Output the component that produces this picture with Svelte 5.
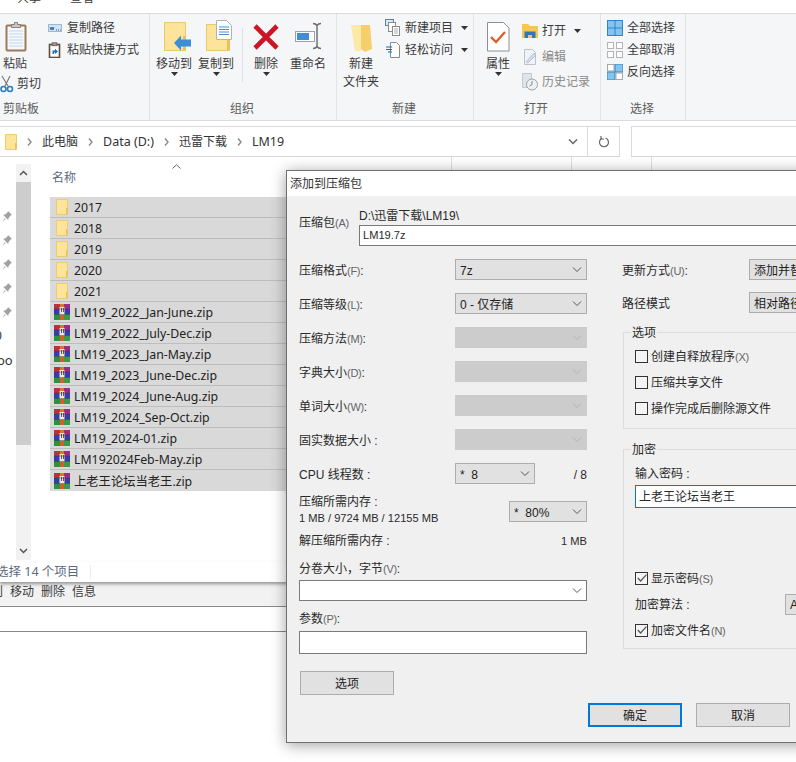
<script>
	const FILES = [
		{ name: '2017', dir: true },
		{ name: '2018', dir: true },
		{ name: '2019', dir: true },
		{ name: '2020', dir: true },
		{ name: '2021', dir: true },
		{ name: 'LM19_2022_Jan-June.zip' },
		{ name: 'LM19_2022_July-Dec.zip' },
		{ name: 'LM19_2023_Jan-May.zip' },
		{ name: 'LM19_2023_June-Dec.zip' },
		{ name: 'LM19_2024_June-Aug.zip' },
		{ name: 'LM19_2024_Sep-Oct.zip' },
		{ name: 'LM19_2024-01.zip' },
		{ name: 'LM192024Feb-May.zip' },
		{ name: '上老王论坛当老王.zip' }
	];

	const DISABLED_ROWS = [
		{ label: '压缩方法', key: '(M)' },
		{ label: '字典大小', key: '(D)' },
		{ label: '单词大小', key: '(W)' },
		{ label: '固实数据大小', key: '' }
	];

	const OPTIONS = [
		{ label: '创建自释放程序', key: '(X)' },
		{ label: '压缩共享文件', key: '' },
		{ label: '操作完成后删除源文件', key: '' }
	];

	const CRUMBS = [
		{ name: '此电脑' },
		{ name: 'Data (D:)', latin: true },
		{ name: '迅雷下载' },
		{ name: 'LM19', latin: true }
	];
</script>

{#snippet chevron()}
	<svg class="chev" width="10" height="6" viewBox="0 0 10 6" fill="none" stroke="currentColor" stroke-width="1"><path d="M1 .5 5 4.5 9 .5" /></svg>
{/snippet}

{#snippet drop()}
	<svg class="drop" width="7" height="4" viewBox="0 0 7 4"><path d="M0 0h7L3.5 4z" fill="#333" /></svg>
{/snippet}

{#snippet crumbArrow()}
	<svg class="crumb-arrow" width="5" height="8" viewBox="0 0 5 8" fill="none" stroke="#8a8a8a" stroke-width="1.4"><path d="M1 .5 4 4 1 7.5" /></svg>
{/snippet}

{#snippet pin()}
	<svg class="pin" width="10" height="11" viewBox="0 0 10 11"><path d="M6 0 10 4 8.6 4.6 6.6 7 6.2 9 1 3.8 3 3.4 5.4 1.4zM3 7 0 10.5 3.6 8z" fill="#a2a2a2" /></svg>
{/snippet}

{#snippet folderSmall()}
	<svg width="12" height="16" viewBox="0 0 12 16" class="file-icon-dir"><path d="M.5.5h11v15H.5z" fill="#fde49a" stroke="#eccb72" /><path d="M10 9v6.500h1.500V9z" fill="#e9c25c" /></svg>
{/snippet}

{#snippet rar()}
	<svg width="16" height="16" viewBox="0 0 16 16" class="file-icon">
		<rect x="0" y="0" width="6" height="5" fill="#b8323c" />
		<rect x="6" y="0" width="4" height="5" fill="#d8782c" />
		<rect x="10" y="0" width="6" height="5" fill="#9c2c80" />
		<rect x="0" y="5" width="16" height="5" fill="#3a3ab0" />
		<rect x="0" y="10" width="6" height="6" fill="#2f8f3c" />
		<rect x="6" y="10" width="4" height="6" fill="#c8642c" />
		<rect x="10" y="10" width="6" height="6" fill="#3a9a48" />
		<path d="M5.500 3v8h5V3" fill="#efe9d4" />
		<rect x="7" y="4" width="1" height="4" fill="#5a5a5a" />
		<rect x="9" y="4" width="1" height="4" fill="#5a5a5a" />
		<rect x="0" y="4.500" width="16" height="1" fill="#5a2a4a" opacity=".5" />
		<rect x="0" y="10" width="16" height="1" fill="#1e3a3a" opacity=".5" />
	</svg>
{/snippet}

{#snippet check(on)}
	<span class="check">
		{#if on}
			<svg width="10" height="10" viewBox="0 0 10 10" fill="none" stroke="#555" stroke-width="1.2"><path d="M.8 5 3.6 8 9.4 1.6" /></svg>
		{/if}
	</span>
{/snippet}

{#snippet select(text, extra = '')}
	<div class="select {extra}">
		<span class="select-text">{text}</span>
		{@render chevron()}
	</div>
{/snippet}

<div class="screen">
	<div class="tabs">
		<span class="tab-a">共享</span>
		<span class="tab-b">查看</span>
	</div>

	<div class="ribbon">
		<!-- clipboard -->
		<section class="group g1">
			<div class="tools">
				<div class="paste-col">
					<div class="tool tool-paste">
						<svg width="30" height="38" viewBox="0 0 30 38">
							<rect x="6.500" y="9.500" width="19" height="25" rx="1" fill="#f4f8fc" stroke="#9b7a58" stroke-width="2" />
							<path d="M9 15h14M9 18h14M9 21h14M9 24h14M9 27h14M9 30h14" stroke="#c4d6ea" />
							<path d="M11.500 11.500v-3h3v-2h3v2h3v3z" fill="#c9c9c9" stroke="#77675a" stroke-width=".8" />
						</svg>
						<span>粘贴</span>
					</div>
					<div class="cut">
						<svg width="14" height="18" viewBox="0 0 14 18" fill="none">
							<path d="M10 1 5 11M2 1l6 10" stroke="#7c7c7c" stroke-width="1.2" />
							<circle cx="3.500" cy="14" r="2.500" stroke="#2a7fc4" stroke-width="1.6" />
							<circle cx="10" cy="14" r="2.500" stroke="#2a7fc4" stroke-width="1.6" />
						</svg>
						<span>剪切</span>
					</div>
				</div>
				<div class="small-col col-clip">
					<div class="small">
						<svg width="16" height="16" viewBox="0 0 16 16"><rect x="1.500" y="4.500" width="13" height="7" fill="#cfe4f6" stroke="#9db9d2" /><path d="M3 7l1 3 1-3 1 3 1-3" fill="none" stroke="#36618c" stroke-width=".9" /><path d="M9 10h1M11 10h1M13 10h.8" stroke="#36618c" /></svg>
						<span>复制路径</span>
					</div>
					<div class="small">
						<svg width="16" height="16" viewBox="0 0 16 16"><rect x="2.500" y="2.500" width="10" height="13" fill="#fff" stroke="#5f4c3c" stroke-width="1.6" /><rect x="5" y="0.800" width="5" height="3" fill="#999" stroke="#5f4c3c" stroke-width=".7" /><path d="M5.500 12V8.500H8V6.800l3 2.600L8 12v-1.600H7V12z" fill="#1e6fb8" /></svg>
						<span>粘贴快捷方式</span>
					</div>
				</div>
			</div>
			<div class="group-label label-clip">剪贴板</div>
		</section>

		<!-- organize -->
		<section class="group g2">
			<div class="tools org">
				<div class="tool">
					<svg width="36" height="38" viewBox="0 0 36 38">
						<rect x="8.500" y="6.500" width="21" height="28" fill="#fde49a" stroke="#e9c86e" />
						<rect x="27" y="20" width="3" height="14" fill="#e9c25c" />
						<path d="M18 27 25 19.500v4h10v7H25v4z" fill="#3a8fd8" />
					</svg>
					<span>移动到</span>
					{@render drop()}
				</div>
				<div class="tool">
					<svg width="36" height="38" viewBox="0 0 36 38">
						<rect x="8.500" y="8.500" width="23" height="26" fill="#fde49a" stroke="#e9c86e" />
						<rect x="29" y="20" width="3" height="14" fill="#e9c25c" />
						<path d="M18.500 4.500h10l5 5v14h-15z" fill="#fff" stroke="#aab4c0" />
						<path d="M21 11h10M21 13.500h10M21 16h10M21 18.500h10" stroke="#4c8fd0" />
					</svg>
					<span>复制到</span>
					{@render drop()}
				</div>
				<div class="ribbon-sep"></div>
				<div class="tool">
					<svg width="36" height="38" viewBox="0 0 36 38">
						<path d="M7 10 29 32M29 10 7 32" stroke="#cc1422" stroke-width="4.600" />
					</svg>
					<span>删除</span>
					{@render drop()}
				</div>
				<div class="tool">
					<svg width="36" height="38" viewBox="0 0 36 38" fill="none">
						<rect x="5.500" y="15.500" width="19" height="10" stroke="#9aa3ac" fill="#fff" />
						<rect x="7" y="17" width="12" height="7" fill="#3f8fd6" />
						<path d="M23 7.500c2 0 3 .5 4 2 1-1.500 2-2 4-2M23 32.500c2 0 3-.5 4-2 1 1.500 2 2 4 2M27 9v22" stroke="#6a6a6a" stroke-width="1.400" />
					</svg>
					<span>重命名</span>
				</div>
			</div>
			<div class="group-label label-org">组织</div>
		</section>

		<!-- new -->
		<section class="group g3">
			<div class="tools">
				<div class="tool tool-new">
					<svg width="36" height="38" viewBox="0 0 36 38">
						<path d="M8 9h10v26H12z" fill="#fde8a8" />
						<path d="M18 9h9l2 24-7 3-4-3z" fill="#f6cf6a" />
					</svg>
					<span>新建</span>
					<span>文件夹</span>
				</div>
				<div class="small-col col-new">
					<div class="small">
						<svg width="16" height="18" viewBox="0 0 16 18"><rect x="0.500" y="0.500" width="8" height="6" fill="#dbe9f5" stroke="#5f7f9c" /><rect x="3.500" y="3.500" width="7" height="9" fill="#fff" stroke="#8a8a8a" /><rect x="7.500" y="7.500" width="7" height="9" fill="#fff" stroke="#8a8a8a" /><path d="M9 10h4M9 12h4M9 14h4" stroke="#aaa" /></svg>
						<span>新建项目</span>
						{@render drop()}
					</div>
					<div class="small">
						<svg width="16" height="18" viewBox="0 0 16 18" fill="none"><path d="M5.500 1.500h6l3 3v12h-9z" fill="#fff" stroke="#8a8a8a" /><path d="M1 6h6M1 8.500h6M3 11h4" stroke="#1f6ea8" /></svg>
						<span>轻松访问</span>
						{@render drop()}
					</div>
				</div>
			</div>
			<div class="group-label label-new">新建</div>
		</section>

		<!-- open -->
		<section class="group g4">
			<div class="tools">
				<div class="tool">
					<svg width="36" height="38" viewBox="0 0 36 38">
						<path d="M7.500 6.500h16l5.500 5.500v23H7.500z" fill="#fff" stroke="#8f8f8f" />
						<path d="M11 21 16 26 25 16" fill="none" stroke="#dc5f2c" stroke-width="2.400" />
					</svg>
					<span>属性</span>
					{@render drop()}
				</div>
				<div class="open-col">
					<div class="small">
						<svg width="16" height="16" viewBox="0 0 16 16"><path d="M0 1h6l2 2h8v12H0z" fill="#f6c64e" /><path d="M2.500 8.500h11V15h-3.500v-3H6v3H2.500z" fill="#2c79ba" /></svg>
						<span>打开</span>
						{@render drop()}
					</div>
					<div class="small muted">
						<svg width="16" height="18" viewBox="0 0 16 18"><path d="M2.500 1.500h8l3 3v12h-11z" fill="#f0f3f6" stroke="#b9c3cc" /><path d="M4 14 12 5l2 2-8 8z" fill="#cfdbe6" stroke="#a9b8c6" stroke-width=".7" /></svg>
						<span>编辑</span>
					</div>
					<div class="small muted">
						<svg width="16" height="18" viewBox="0 0 16 18"><path d="M.500.500h9v14h-9z" fill="#dfe4e9" stroke="#c4c9ce" /><circle cx="10" cy="11.500" r="5.500" fill="#eef1f3" stroke="#9aa1a8" /><path d="M10 8v3.500l-2.500 1.500" fill="none" stroke="#7f868c" /></svg>
						<span>历史记录</span>
					</div>
				</div>
			</div>
			<div class="group-label label-open">打开</div>
		</section>

		<!-- select -->
		<section class="group g5">
			<div class="small-col col-select">
				<div class="small">
					<svg width="16" height="16" viewBox="0 0 16 16"><rect x="0" y="0" width="16" height="16" fill="#2e86c9" /><rect x="1" y="1" width="6.500" height="6.500" fill="#84c4ee" /><rect x="8.500" y="1" width="6.500" height="6.500" fill="#84c4ee" /><rect x="1" y="8.500" width="6.500" height="6.500" fill="#84c4ee" /><rect x="8.500" y="8.500" width="6.500" height="6.500" fill="#84c4ee" /></svg>
					<span>全部选择</span>
				</div>
				<div class="small">
					<svg width="16" height="16" viewBox="0 0 16 16" fill="#fff" stroke="#b4b4b4"><rect x=".5" y=".5" width="6" height="6" /><rect x="9.500" y=".5" width="6" height="6" /><rect x=".5" y="9.500" width="6" height="6" /><rect x="9.500" y="9.500" width="6" height="6" /></svg>
					<span>全部取消</span>
				</div>
				<div class="small">
					<svg width="16" height="16" viewBox="0 0 16 16"><rect x=".5" y=".5" width="6.500" height="6.500" fill="#fff" stroke="#a8a8a8" /><rect x="8" y="0" width="8" height="8" fill="#84c4ee" stroke="#2e86c9" /><rect x="0" y="8" width="8" height="8" fill="#84c4ee" stroke="#2e86c9" /><rect x="9" y="9" width="6.500" height="6.500" fill="#fff" stroke="#a8a8a8" /></svg>
					<span>反向选择</span>
				</div>
			</div>
			<div class="group-label label-select">选择</div>
		</section>
	</div>

	<div class="addr-row">
		<div class="addr">
			<svg class="addr-folder" width="12" height="16" viewBox="0 0 12 16"><path d="M.5.500h11v15H.5z" fill="#fde49a" stroke="#eccb72" /><path d="M10 9v6.500h1.500V9z" fill="#e9c25c" /></svg>
			{#each CRUMBS as c (c.name)}
				{@render crumbArrow()}
				<span class="crumb" class:crumb-latin={c.latin}>{c.name}</span>
			{/each}
			<span class="addr-space"></span>
			<svg class="addr-chev" width="10" height="6" viewBox="0 0 10 6" fill="none" stroke="#666" stroke-width="1.500"><path d="M1 .5 5 4.500 9 .5" /></svg>
			<div class="refresh">
				<svg width="12" height="12" viewBox="0 0 12 12" fill="none" stroke="#666" stroke-width="1.200"><path d="M7.500 2a4.500 4.500 0 1 1-4 .5" /><path d="M3 .5v3h3" transform="translate(0 -.5)" /></svg>
			</div>
		</div>
		<div class="search"></div>
	</div>

	<div class="content">
		<div class="nav">
			<div class="pins">
				{#each [0, 1, 2, 3, 4] as i (i)}
					{@render pin()}
				{/each}
			</div>
			<span class="nav-a">0</span>
			<span class="nav-b">oo</span>
		</div>
		<div class="scrollbar">
			<svg class="sb-up" width="9" height="6" viewBox="0 0 9 6" fill="none" stroke="#555" stroke-width="1.500"><path d="M1 5 4.500 1.500 8 5" /></svg>
			<div class="thumb"></div>
			<svg class="sb-down" width="9" height="6" viewBox="0 0 9 6" fill="none" stroke="#555" stroke-width="1.500"><path d="M1 1 4.500 4.500 8 1" /></svg>
		</div>
		<div class="list">
			<div class="list-head">
				<svg class="sort" width="9" height="5" viewBox="0 0 9 5" fill="none" stroke="#666"><path d="M.5 4.500 4.500.8 8.500 4.500" /></svg>
				<div class="head-cell cell-name"><span>名称</span></div>
				<div class="head-cell cell-b"></div>
				<div class="head-cell cell-c"></div>
			</div>
			{#each FILES as f (f.name)}
				<div class="file">
					<span class="file-slot">
						{#if f.dir}
							{@render folderSmall()}
						{:else}
							{@render rar()}
						{/if}
					</span>
					<span class="file-name">{f.name}</span>
				</div>
			{/each}
		</div>
	</div>

	<div class="status"><span class="status-text">选择 14 个项目</span><span class="status-sep"></span></div>

	<div class="below">
		<span class="below-clip"><span>到</span></span>
		<span>移动</span>
		<span>删除</span>
		<span>信息</span>
	</div>
	<div class="below-field"></div>

	<!-- 7-Zip dialog over the explorer window -->
	<div class="dialog">
		<div class="title">添加到压缩包</div>
		<div class="dialog-body">
			<div class="archive">
				<div class="archive-label">压缩包<i>(A)</i></div>
				<div class="archive-path">
					<div class="path-text"><span>D:\</span>迅雷下载<span>\LM19\</span></div>
					<div class="input"><span class="lat">LM19.7z</span></div>
				</div>
			</div>

			<div class="columns">
				<div class="left">
					<div class="row"><span class="row-label">压缩格式<i>(F)</i>:</span>{@render select('7z', 'wide')}</div>
					<div class="row"><span class="row-label">压缩等级<i>(L)</i>:</span>{@render select('0 - 仅存储', 'wide')}</div>
					{#each DISABLED_ROWS as r (r.label)}
						<div class="row"><span class="row-label">{r.label}<i>{r.key}</i>{r.key ? ':' : ' :'}</span>{@render select('', 'wide off')}</div>
					{/each}
					<div class="row row-cpu">
						<span class="row-label">CPU 线程数 :</span>
						{@render select('*  8', 'short')}
						<span class="cpu-total">/ 8</span>
					</div>
					<div class="mem">
						<div>
							<div class="line">压缩所需内存 :</div>
							<div class="line"><span class="lat">1 MB / 9724 MB / 12155 MB</span></div>
						</div>
						{@render select('*  80%', 'pct')}
					</div>
					<div class="line line-spread"><span>解压缩所需内存 :</span><span class="lat">1 MB</span></div>
					<div class="line vol-label">分卷大小，字节<i>(V)</i>:</div>
					<div class="combo">{@render chevron()}</div>
					<div class="line param-label">参数<i>(P)</i>:</div>
					<div class="param"></div>
					<div class="btn btn-opts">选项</div>
				</div>

				<div class="right">
					<div class="row"><span class="right-label">更新方式<i>(U)</i>:</span>{@render select('添加并替换文件', 'far')}</div>
					<div class="row row-path"><span class="right-label">路径模式</span>{@render select('相对路径', 'far')}</div>

					<fieldset class="box box-opts">
						<legend>选项</legend>
						{#each OPTIONS as o (o.label)}
							<div class="opt">{@render check(false)}<span>{o.label}<i>{o.key}</i></span></div>
						{/each}
					</fieldset>

					<fieldset class="box box-enc">
						<legend>加密</legend>
						<div class="line">输入密码 :</div>
						<div class="pass">上老王论坛当老王</div>
						<div class="opt opt-show">{@render check(true)}<span>显示密码<i>(S)</i></span></div>
						<div class="algo"><span>加密算法 :</span>{@render select('AES-256', 'far algo-sel')}</div>
						<div class="opt">{@render check(true)}<span>加密文件名<i>(N)</i></span></div>
					</fieldset>
				</div>
			</div>

			<div class="footer">
				<div class="btn btn-ok">确定</div>
				<div class="btn">取消</div>
			</div>
		</div>
	</div>
</div>

<style>
	:global(body) {
		margin: 0;
		background: #fff;
	}

	.screen {
		position: relative;
		width: 796px;
		height: 762px;
		overflow: hidden;
		background: #fff;
		font-family: 'Noto Sans', 'Noto Sans CJK SC', sans-serif;
		font-size: 12px;
		line-height: 16px;
		color: #3a3a3a;
	}

	i {
		font-style: normal;
		color: #666;
		font-size: 11px;
		letter-spacing: -0.3px;
	}

	.lat {
		font-size: 11.1px;
	}

	/* ── Tabs ── */
	.tabs {
		height: 13px;
		overflow: hidden;
		border-bottom: 1px solid #dadbdc;
		display: flex;
	}

	.tabs span {
		margin-top: -10px;
		height: 16px;
	}

	.tab-a { margin-left: 17px; }
	.tab-b { margin-left: 29px; }

	/* ── Ribbon ── */
	.ribbon {
		box-sizing: border-box;
		height: 107px;
		display: flex;
		background: #f5f6f7;
		border-bottom: 1px solid #dadbdc;
		white-space: nowrap;
	}

	.group {
		box-sizing: border-box;
		flex: none;
		height: 106px;
		padding-top: 3px;
		border-right: 1px solid #e2e3e4;
		display: flex;
		flex-direction: column;
	}

	.g1 { width: 150px; }
	.g2 { width: 187px; }
	.g3 { width: 137px; }
	.g4 { width: 127px; }
	.g5 { width: 85px; }

	.tools {
		height: 80px;
		flex: none;
		display: flex;
	}

	.col-select {
		height: 80px;
		flex: none;
		margin-left: 6px;
	}

	.group-label {
		height: 23px;
		line-height: 24px;
		color: #5c5c5c;
	}

	.label-clip { margin-left: 3px; }
	.label-org { margin-left: 80px; }
	.label-new { margin-left: 55px; }
	.label-open { margin-left: 50px; }
	.label-select { margin-left: 29px; }

	.tool {
		width: 36px;
		display: flex;
		flex-direction: column;
		align-items: center;
		line-height: 18px;
	}

	.tool svg {
		flex: none;
		margin: -1px 0 1px;
	}

	.tool .drop {
		margin: -1px 0 0;
	}

	.tools > .tool {
		margin-left: 6px;
	}

	.ribbon-sep {
		flex: none;
		width: 1px;
		height: 54px;
		margin: 11px -1px 0 8px;
		background: #dfe0e1;
	}

	.paste-col {
		width: 30px;
		flex: none;
	}

	.tools > .paste-col .tool {
		width: 30px;
		margin-left: 0;
	}

	.cut {
		display: flex;
		align-items: center;
		width: 45px;
		height: 22px;
		gap: 3px;
	}

	.cut svg {
		flex: none;
	}

	.small-col {
		display: flex;
		flex-direction: column;
	}

	.col-clip { margin-left: 17px; }
	.col-new { margin-left: 6px; }

	.small {
		display: flex;
		align-items: center;
		gap: 4px;
		height: 22px;
	}

	.small svg {
		flex: none;
	}

	.small .drop {
		margin-left: 4px;
	}

	.open-col {
		display: flex;
		flex-direction: column;
		margin: 3px 0 0 6px;
		gap: 3.5px;
	}

	.muted {
		color: #888;
	}

	/* ── Address bar ── */
	.addr-row {
		display: flex;
		height: 31px;
		margin-top: 5px;
	}

	.addr {
		box-sizing: border-box;
		width: 620px;
		display: flex;
		align-items: center;
		border: 1px solid #d9d9d9;
		border-left: 0;
	}

	.addr-folder {
		margin-left: 5px;
	}

	.crumb-arrow {
		margin: 0 10px 0 10px;
	}

	.crumb {
		color: #333;
	}

	.crumb-latin {
		font-size: 12.5px;
	}

	.addr-space {
		flex: 1;
	}

	.addr-chev {
		margin-right: 9px;
	}

	.refresh {
		width: 31px;
		height: 29px;
		border-left: 1px solid #d9d9d9;
		display: flex;
		align-items: center;
		justify-content: center;
	}

	.search {
		flex: 1;
		margin-left: 11px;
		border: 1px solid #d9d9d9;
		border-right: 0;
	}

	/* ── File pane ── */
	.content {
		display: flex;
		height: 405px;
	}

	.nav {
		width: 16px;
		flex: none;
		overflow: hidden;
		color: #333;
	}

	.pins {
		display: flex;
		flex-direction: column;
		align-items: center;
		gap: 13px;
		margin: 54px 0 0 -2px;
	}

	.nav-a {
		display: block;
		height: 16px;
		margin: 10px 0 0 -5px;
	}

	.nav-b {
		display: block;
		height: 16px;
		margin: 8px 0 0 -3px;
		font-size: 13px;
	}

	.scrollbar {
		flex: none;
		width: 15px;
		height: 396px;
		margin-top: 7px;
		background: #f2f2f2;
		display: flex;
		flex-direction: column;
		align-items: center;
	}

	.sb-up {
		margin: 6px 0 6px;
	}

	.thumb {
		width: 15px;
		height: 263px;
		background: #cdcdcd;
	}

	.sb-down {
		margin-top: 103px;
	}

	.list {
		flex: 1;
		margin-left: 19px;
		position: relative;
	}

	.list-head {
		display: flex;
		height: 40px;
	}

	.head-cell {
		box-sizing: border-box;
		flex: none;
		border-right: 1px solid #e0e0e0;
	}

	.cell-name { width: 402px; color: #5b6b80; font-size: 12px; padding: 13px 0 0 2px; }
	.cell-b { width: 120px; }
	.cell-c { width: 80px; }

	.sort {
		position: absolute;
		left: 122px;
		top: 7px;
	}

	.file {
		box-sizing: border-box;
		height: 21px;
		width: 300px;
		display: flex;
		align-items: center;
		background: #d9d9d9;
		border-bottom: 1px solid #bdbdbd;
		color: #222;
		font-size: 12.3px;
	}

	.file:last-child {
		border-bottom: 0;
	}

	.file-name {
		padding-top: 2px;
	}

	.file-slot {
		width: 24px;
		flex: none;
		display: flex;
		padding-left: 4px;
		box-sizing: border-box;
	}

	.file-icon-dir {
		margin-left: 2px;
	}

	/* ── Status ── */
	.status {
		height: 20px;
		display: flex;
		align-items: center;
		color: #5b6b80;
		font-size: 12.5px;
		overflow: hidden;
		box-shadow: 0 2px 3px rgba(0, 0, 0, 0.35);
		position: relative;
	}

	.status-text {
		margin-left: -4px;
	}

	.status-sep {
		width: 1px;
		height: 14px;
		margin-left: 11px;
		background: #ececec;
	}

	.below {
		box-sizing: border-box;
		height: 25px;
		display: flex;
		align-items: center;
		gap: 7px;
		padding-bottom: 4px;
		background: linear-gradient(#e9e9e9, #f2f2f2 30%);
		border-bottom: 1px solid #888;
	}

	.below-clip {
		width: 3px;
		overflow: hidden;
		display: flex;
		justify-content: flex-end;
	}

	.below-clip span {
		flex: none;
	}

	.below-field {
		height: 24px;
		border-bottom: 1px solid #888;
	}

	/* ── Dialog ── */
	.dialog {
		position: absolute;
		left: 286px;
		top: 170px;
		width: 560px;
		height: 573px;
		box-sizing: border-box;
		border: 1px solid #707070;
		background: #f0f0f0;
		box-shadow: 0 2px 14px rgba(0, 0, 0, 0.38);
		color: #2a2a2a;
		font-family: 'Liberation Sans', 'Noto Sans CJK SC', sans-serif;
	}

	.title {
		height: 25px;
		line-height: 26px;
		padding-left: 3px;
		background: #fff;
		color: #333;
	}

	.dialog-body {
		padding: 12px 0 0 12px;
	}

	.archive {
		display: flex;
	}

	.archive-label {
		width: 60px;
		flex: none;
		padding-top: 7px;
		white-space: nowrap;
	}

	.archive-path {
		flex: none;
	}

	.path-text {
		height: 17px;
		line-height: 17px;
	}

	.input {
		box-sizing: border-box;
		width: 500px;
		height: 21px;
		line-height: 19px;
		padding-left: 3px;
		background: #fff;
		border: 1px solid #7a7a7a;
	}

	.columns {
		display: flex;
		margin-top: 13px;
	}

	.left {
		width: 288px;
		flex: none;
	}

	.right {
		margin-left: 35px;
	}

	.row {
		display: flex;
		align-items: center;
		height: 21px;
		margin-bottom: 13px;
	}

	.row-label {
		width: 156px;
		flex: none;
		padding-top: 2px;
	}

	.right-label {
		width: 127px;
		flex: none;
		padding-top: 2px;
	}

	.row-path {
		margin-bottom: 11px;
		margin-top: -1px;
	}

	.select {
		box-sizing: border-box;
		height: 21px;
		display: flex;
		align-items: center;
		justify-content: space-between;
		padding: 0 4px;
		background: #e1e1e1;
		border: 1px solid #adadad;
		color: #222;
		flex: none;
		overflow: hidden;
	}

	.select-text {
		white-space: pre;
		padding-top: 2px;
	}

	.chev {
		flex: none;
		color: #555;
	}

	.wide { width: 132px; }
	.short { width: 80px; }
	.pct { width: 78px; margin-top: 8px; }

	.far {
		width: 120px;
		flex: none;
	}

	.off {
		background: #cccccc;
		border-color: #cccccc;
	}

	.off .chev {
		color: #b2b2b2;
	}

	.row-cpu {
		margin-bottom: 9px;
	}

	.cpu-total {
		margin-left: auto;
		padding-top: 2px;
	}

	.mem {
		display: flex;
		justify-content: space-between;
		align-items: flex-start;
	}

	.line {
		height: 16px;
		line-height: 18px;
		white-space: nowrap;
	}

	.line-spread {
		display: flex;
		justify-content: space-between;
		margin-top: 7px;
	}

	.vol-label {
		margin-top: 12px;
	}

	.combo {
		box-sizing: border-box;
		height: 21px;
		margin-top: 4px;
		padding-right: 4px;
		display: flex;
		align-items: center;
		justify-content: flex-end;
		background: #fff;
		border: 1px solid #7a7a7a;
	}

	.param-label {
		margin-top: 9px;
	}

	.param {
		box-sizing: border-box;
		height: 23px;
		margin-top: 5px;
		background: #fff;
		border: 1px solid #7a7a7a;
	}

	.btn {
		box-sizing: border-box;
		width: 94px;
		height: 24px;
		line-height: 24px;
		text-align: center;
		background: #e1e1e1;
		border: 1px solid #adadad;
		color: #222;
	}

	.btn-opts {
		margin: 17px 0 0 1px;
	}

	.footer {
		display: flex;
		gap: 14px;
		margin: 8px 0 0 289px;
	}

	.btn-ok {
		border: 2px solid #0078d7;
		line-height: 22px;
	}

	/* ── Group boxes ── */
	.box {
		box-sizing: border-box;
		width: 300px;
		margin: 0 0 0 1px;
		padding: 3px 0 7px 11px;
		border: 1px solid #dcdcdc;
		min-inline-size: 0;
	}

	.box legend {
		padding: 0 1px;
		margin-left: -4px;
		line-height: 18px;
		height: 16px;
	}

	.box-enc {
		margin-top: 12px;
		padding: 8px 0 5px 11px;
	}

	.opt {
		display: flex;
		align-items: center;
		gap: 3px;
		height: 26px;
	}

	.opt span:last-child {
		padding-top: 2px;
	}

	.check {
		box-sizing: border-box;
		width: 13px;
		height: 13px;
		flex: none;
		display: flex;
		align-items: center;
		justify-content: center;
		background: #f4f4f4;
		border: 1px solid #333;
	}

	.pass {
		box-sizing: border-box;
		width: 280px;
		height: 23px;
		line-height: 22px;
		margin-top: 4px;
		padding-left: 3px;
		background: #fff;
		border: 1px solid #0078d7;
	}

	.opt-show {
		margin-top: 57px;
	}

	.algo {
		display: flex;
		align-items: center;
		height: 26px;
	}

	.algo > span:first-child {
		width: 150px;
		flex: none;
		padding-top: 2px;
	}
</style>
